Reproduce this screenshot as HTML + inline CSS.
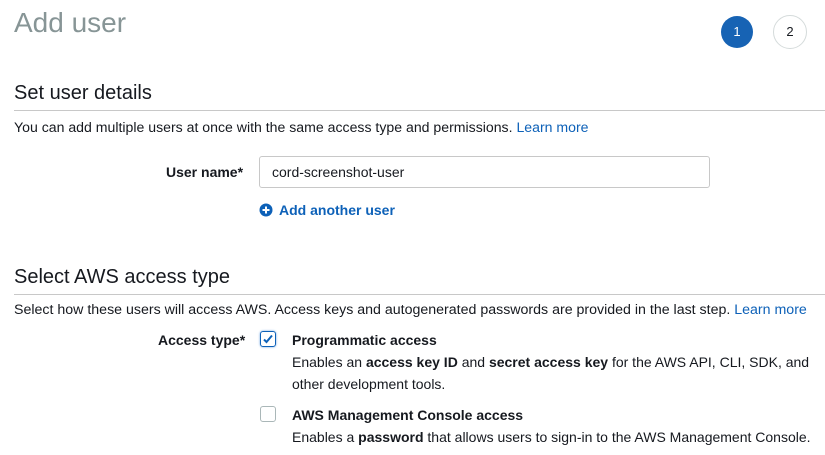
<!DOCTYPE html>
<html><head><style>
body{margin:0;width:825px;height:455px;overflow:hidden;background:#fff;font-family:"Liberation Sans",sans-serif;color:#16191f;position:relative}
.a{position:absolute;white-space:nowrap}
h1{position:absolute;left:14px;top:7px;margin:0;font-weight:400;font-size:28px;color:#879596}
.c{position:absolute;width:32px;height:32px;border-radius:50%;font-size:13px;text-align:center;line-height:32px;top:16px}
h2{position:absolute;left:14px;margin:0;font-weight:400;font-size:20px;color:#16191f}
.hr{position:absolute;left:14px;right:0;height:1px;background:#c8c8c8}
.p{font-size:14px;color:#16191f}
a{color:#0d61b8;text-decoration:none}
.cb{position:absolute;width:14px;height:14px;border:1px solid #aab7b8;border-radius:3px}
</style></head><body>
<h1>Add user</h1>
<div class="c" style="left:721px;background:#1763b4;color:#fff">1</div>
<div class="c" style="left:773px;border:1px solid #d5dbdb;width:32px;height:32px;line-height:32px;top:15px;color:#16191f">2</div>
<h2 style="top:82px">Set user details</h2>
<div class="hr" style="top:110px"></div>
<div class="a p" style="left:14px;top:119px;font-size:14.1px">You can add multiple users at once with the same access type and permissions. <a>Learn more</a></div>
<div class="a p" style="left:166px;top:164px;font-weight:bold">User name*</div>
<div class="a" style="left:259px;top:156px;border:1px solid #c8c8c8;border-radius:3px;font-size:14px;line-height:30px;padding-left:12px;box-sizing:border-box;width:451px;height:32px">cord-screenshot-user</div>
<svg class="a" style="left:259px;top:203px" width="14" height="14"><circle cx="7" cy="7" r="6.5" fill="#0d61b8"/><path d="M7 3.5v7M3.5 7h7" stroke="#fff" stroke-width="2"/></svg>
<div class="a p" style="left:279px;top:202px;font-weight:bold;color:#0d61b8">Add another user</div>
<h2 style="top:266px">Select AWS access type</h2>
<div class="hr" style="top:294px"></div>
<div class="a p" style="left:14px;top:302px;font-size:14.2px">Select how these users will access AWS. Access keys and autogenerated passwords are provided in the last step. <a>Learn more</a></div>
<div class="a p" style="left:158px;top:332px;font-weight:bold">Access type*</div>
<div class="cb" style="left:260px;top:331px;border-color:#0d61b8;box-shadow:0 0 2px #6aa0e0"></div>
<svg class="a" style="left:262px;top:333px" width="12" height="12"><path d="M2 6.5l2.5 2.5L10 2.5" stroke="#0d61b8" stroke-width="2" fill="none"/></svg>
<div class="a p" style="left:292px;top:332px;font-weight:bold">Programmatic access</div>
<div class="a p" style="left:292px;top:351px;line-height:22px">Enables an <b>access key ID</b> and <b>secret access key</b> for the AWS API, CLI, SDK, and<br>other development tools.</div>
<div class="cb" style="left:260px;top:406px"></div>
<div class="a p" style="left:292px;top:407px;font-weight:bold">AWS Management Console access</div>
<div class="a p" style="left:292px;top:429px">Enables a <b>password</b> that allows users to sign-in to the AWS Management Console.</div>
</body></html>
